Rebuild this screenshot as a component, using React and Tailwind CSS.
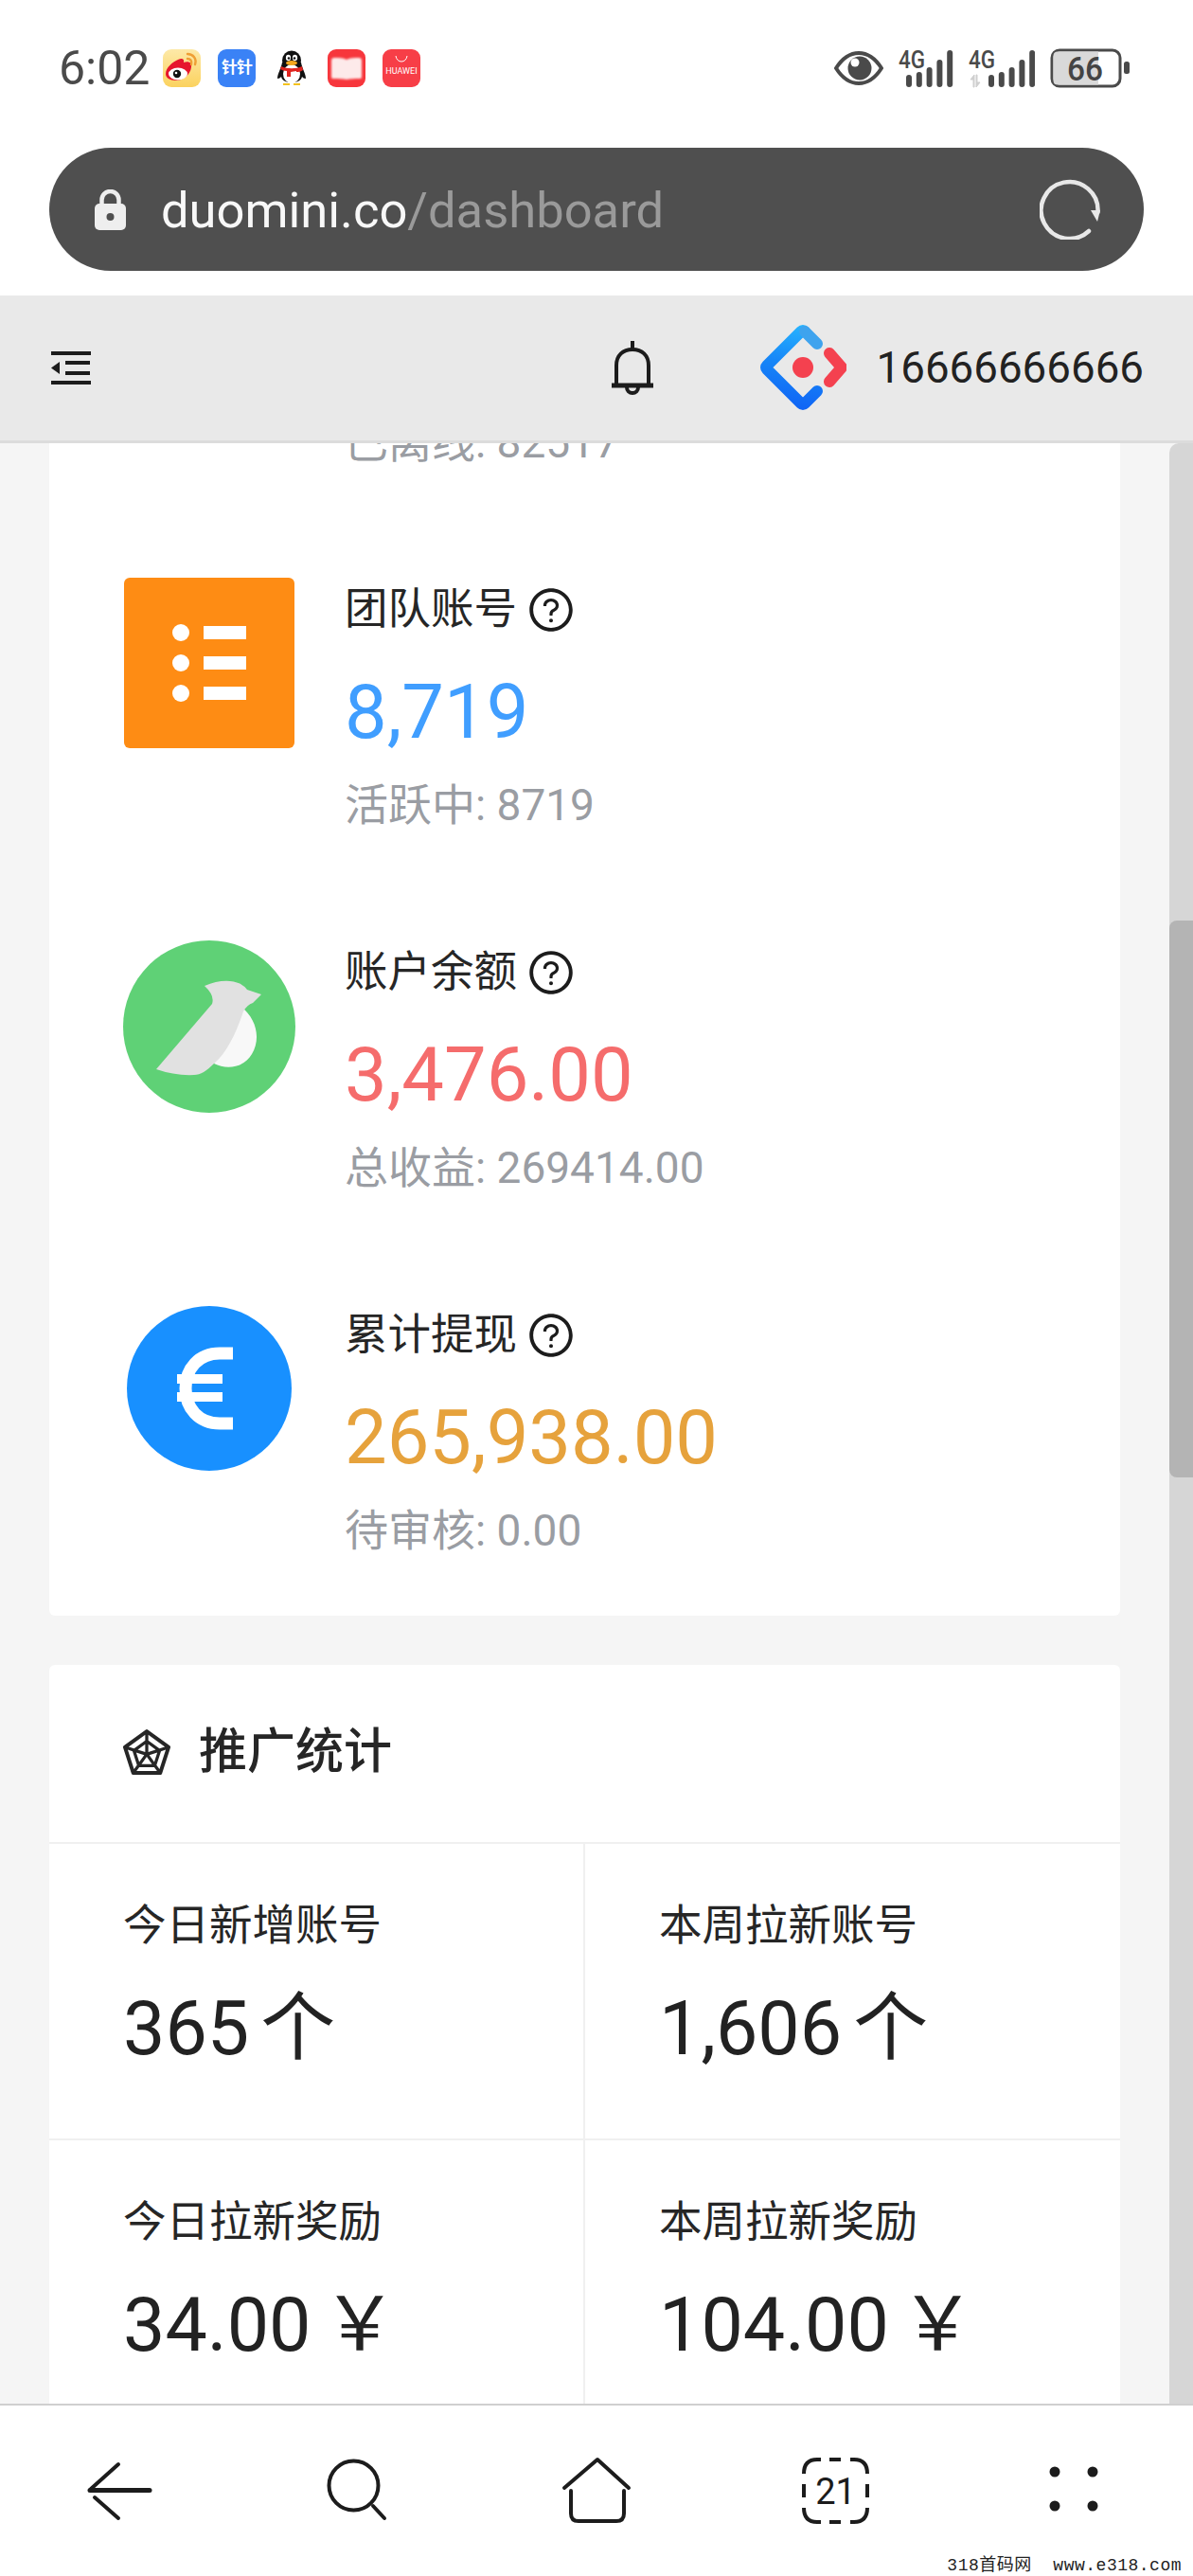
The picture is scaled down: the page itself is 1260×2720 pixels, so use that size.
import { AiOutlineQuestionCircle, AiOutlineRadarChart } from 'react-icons/ai';

const FONT = 'font-["Roboto","Noto_Sans_CJK_SC",sans-serif]';

const Weibo = () => (
  <svg width="40" height="40" viewBox="0 0 40 40" className="rounded-[9px]">
    <defs>
      <linearGradient id="wbBg" x1="0" y1="0" x2="0" y2="40" gradientUnits="userSpaceOnUse">
        <stop offset="0" stopColor="#fde9a8" />
        <stop offset="1" stopColor="#fbd25e" />
      </linearGradient>
    </defs>
    <rect width="40" height="40" fill="url(#wbBg)" />
    <path d="M3 26c0-7 8-13 13-15 4-2 7-1 6 3 5-2 9 0 8 5-1 8-9 14-16 14-7 0-11-3-11-7z" fill="#e6162d" />
    <ellipse cx="16" cy="26" rx="10" ry="6.500" fill="#fff" />
    <circle cx="15" cy="26" r="4.200" fill="#111" />
    <circle cx="14" cy="25" r="1.300" fill="#fff" />
    <path d="M26 5c6 0 10 5 8 11M26 10c3 0 5 2 4 6" fill="none" stroke="#ef9f35" strokeWidth="2.400" strokeLinecap="round" />
  </svg>
);

const Zhen = () => (
  <div className={`w-10 h-10 rounded-[9px] bg-[#3a82f6] text-white text-[17px] font-bold flex items-center justify-center tracking-[-1px] ${FONT}`}>
    针针
  </div>
);

const Penguin = () => (
  <svg width="40" height="40" viewBox="0 0 40 40">
    <ellipse cx="20" cy="12" rx="10" ry="10.500" fill="#111" />
    <path d="M10 14c-1 6-5 12-5 17 2 0 3-1 4-2 1 4 5 6 11 6s10-2 11-6c1 1 2 2 4 2 0-5-4-11-5-17z" fill="#111" />
    <ellipse cx="20" cy="26" rx="9" ry="10" fill="#fff" />
    <ellipse cx="16.500" cy="9" rx="2.600" ry="3.200" fill="#fff" />
    <ellipse cx="23.500" cy="9" rx="2.600" ry="3.200" fill="#fff" />
    <circle cx="17" cy="9.500" r="1.300" fill="#111" />
    <circle cx="23" cy="9.500" r="1.300" fill="#111" />
    <ellipse cx="20" cy="14.500" rx="6" ry="2.400" fill="#f4a71c" />
    <path d="M9 18c6 3 16 3 22 0l1 4c-3 2-5 2-7 2v-1l-6 1v5h-4v-6c-3 0-5-1-7-2z" fill="#e0241f" />
    <path d="M11 36h7v2h-7zM22 36h7v2h-7z" fill="#f4c21c" />
  </svg>
);

const RedBook = () => (
  <svg width="40" height="40" viewBox="0 0 40 40" className="rounded-[9px]">
    <rect width="40" height="40" fill="#f7363c" />
    <path d="M7 9c5 0 9 0 13 2 4-2 9-2 13-2 2 0 3 1 3 3v17c0 2-1 2-3 2-4 0-9 0-13 1-4-1-9-1-13-1-2 0-3 0-3-2V12c0-2 1-3 3-3z" fill="#fdeaea" className="blur-[0.8px]" />
  </svg>
);

const HuaweiApp = () => (
  <div className="w-10 h-10 rounded-[9px] bg-[#f73e47] flex flex-col items-center pt-[6px]">
    <svg width="14" height="8" viewBox="0 0 14 8">
      <path d="M1 1c1 8 11 8 12 0" fill="none" stroke="#fff" strokeWidth="1" />
    </svg>
    <span className={`text-[9px] leading-[10px] mt-[4px] text-white ${FONT}`}>HUAWEI</span>
  </div>
);

const Eye = () => (
  <svg width="52" height="36" viewBox="0 0 52 36">
    <path d="M2 18C9 7 17 2 26 2s17 5 24 16c-7 11-15 16-24 16S9 29 2 18z" fill="none" stroke="#4a4a4a" strokeWidth="4" />
    <circle cx="27" cy="18" r="12.500" fill="#4a4a4a" />
    <circle cx="22" cy="12" r="4.500" fill="#fff" />
  </svg>
);

const Signal = ({ width, barX, arrows }) => (
  <svg width={width} height="42" viewBox={`0 0 ${width} 42`}>
    <text x="0" y="21" fontFamily="Roboto" fontWeight="500" fontSize="26" fill="#4a4a4a" textLength="28" lengthAdjust="spacingAndGlyphs">4G</text>
    {arrows && (
      <g fill="#cfcfcf">
        <path d="M5 41V33H2l4-5v13zM9 28v8h3l-4 5V28z" stroke="#cfcfcf" strokeWidth="1" />
      </g>
    )}
    {[28, 25, 20, 12, 2].map((top, i) => (
      <rect key={i} x={barX + i * 10.8} y={top} width="6" height={41 - top} rx="3" fill="#4a4a4a" />
    ))}
  </svg>
);

const Battery = () => (
  <svg width="84" height="42" viewBox="0 0 84 42">
    <rect x="2" y="2" width="72" height="38" rx="8" fill="#fff" stroke="#4a4a4a" strokeWidth="3" />
    <path d="M8 3.500h43v35H8q-4.500 0-4.500-4.500V8q0-4.500 4.500-4.500z" fill="#d9d9d9" />
    <text x="37" y="34" textAnchor="middle" fontFamily="Roboto" fontWeight="500" fontSize="35" fill="#444" textLength="38" lengthAdjust="spacingAndGlyphs">66</text>
    <rect x="78" y="14" width="6" height="13" rx="2.500" fill="#4a4a4a" />
  </svg>
);

const Lock = () => (
  <svg width="33" height="43" viewBox="0 0 33 43">
    <path d="M7.500 17v-6a9 9 0 0 1 18 0v6" fill="none" stroke="#eeeeee" strokeWidth="4.500" />
    <rect y="15" width="33" height="28" rx="5" fill="#eeeeee" />
    <circle cx="16.500" cy="29" r="4" fill="#4f4f4f" />
  </svg>
);

const Reload = () => (
  <svg width="64" height="64" viewBox="0 0 64 64">
    <path d="M52 55A30 30 0 1 1 61.500 35" fill="none" stroke="#e8e8e8" strokeWidth="4.500" strokeLinecap="round" />
    <path d="M54 33h10l-3 12z" fill="#e8e8e8" />
  </svg>
);

const MenuFold = () => (
  <svg width="42" height="35" viewBox="0 0 42 35" fill="#1c1c1c">
    <rect width="42" height="4" />
    <rect x="15" y="10" width="26" height="4" />
    <rect x="15" y="21" width="26" height="4" />
    <rect y="31" width="42" height="4" />
    <path d="M9 11v13L0 17.500z" />
  </svg>
);

const Bell = () => (
  <svg width="44" height="57" viewBox="0 0 44 57" fill="none" stroke="#1c1c1c" strokeWidth="4">
    <path d="M22 0v9" />
    <path d="M5 47V26C5 15 12 9 22 9s17 6 17 17v21" />
    <path d="M0 47h44" strokeWidth="5" />
    <path d="M16 49a6 6 0 0 0 12 0" />
  </svg>
);

const AntLogo = () => (
  <svg width="91" height="91" viewBox="0 0 91 91" fill="none" strokeWidth="12" strokeLinecap="round" strokeLinejoin="round">
    <defs>
      <linearGradient id="antBlue" x1="45" y1="0" x2="30" y2="90" gradientUnits="userSpaceOnUse">
        <stop offset="0" stopColor="#27b4ff" />
        <stop offset="0.45" stopColor="#1787f7" />
        <stop offset="1" stopColor="#0f62f5" />
      </linearGradient>
    </defs>
    <path d="M60 70L47 83q-2 2-4 0L7 47q-2-2 0-4L43 7q2-2 4 0" stroke="url(#antBlue)" />
    <path d="M47 7l13 13" stroke="#3ea3ee" />
    <path d="M73 30l13 15-13 15" stroke="#f4414f" />
    <circle cx="45" cy="45" r="11" fill="#f4414f" stroke="none" />
  </svg>
);

const ListIcon = () => (
  <div className="w-[180px] h-[180px] rounded-[6px] bg-[#fe8c14]">
    <svg width="180" height="180" viewBox="0 0 180 180" fill="#fff">
      <circle cx="60" cy="58" r="9" />
      <circle cx="60" cy="90" r="9" />
      <circle cx="60" cy="122" r="9" />
      <rect x="84" y="51" width="45" height="14" />
      <rect x="84" y="83" width="45" height="14" />
      <rect x="84" y="115" width="45" height="14" />
    </svg>
  </div>
);

const BirdIcon = () => (
  <div className="w-[182px] h-[182px] rounded-full bg-[#5fd176]">
    <svg width="182" height="182" viewBox="0 0 182 182">
      <path d="M122 68C141 81 146 103 136 120C128 134 110 137 96 130Z" fill="#f8f8f8" />
      <path d="M86 48Q100 42 113 43Q125 44 131 52L146 57L137 66Q131 68 127 75C119 99 109 119 96 130C88 138 82 142 75 142Q55 143 35 136L94 67Q97 58 86 48Z" fill="#e1e1e1" />
    </svg>
  </div>
);

const EuroIcon = () => (
  <div className="w-[174px] h-[174px] mt-[3px] rounded-full bg-[#1890ff]">
    <svg width="174" height="174" viewBox="0 0 174 174" fill="none" stroke="#fff" strokeWidth="13">
      <path d="M112 50H98C76 50 62 66 62 87s14 37 36 37h14" />
      <path d="M53 77h48M53 96h48" strokeWidth="10" />
    </svg>
  </div>
);

const StatRow = ({ icon, label, value, color, sub }) => (
  <div className="flex h-[313px]">
    <div className="w-[312px] shrink-0 pl-[78px] flex">
      <div className="w-[182px] flex justify-center items-start">{icon}</div>
    </div>
    <div>
      <div className="mt-[11px] h-[46px] flex items-center">
        <span className="text-[45.500px] leading-[46px] text-[#262626]">{label}</span>
        <AiOutlineQuestionCircle size={52} className="ml-[10px] text-[#1c1c1c]" />
      </div>
      <div className="mt-[35px] h-[100px] text-[79.500px] leading-[100px]" style={{ color }}>{value}</div>
      <div className="mt-[18px] h-[60px] text-[46px] leading-[60px] text-[#9a9da3]">{sub}</div>
    </div>
  </div>
);

const PromoCell = ({ label, value, unit, left }) => (
  <div className={`h-[313px] border-b-2 border-[#f0f0f0] pl-[78px] ${left ? 'border-r-2' : ''}`}>
    <div className="pt-[57px] h-[117px] text-[45.500px] leading-[60px] text-[#262626]">{label}</div>
    <div className="mt-[28px] h-[100px] text-[79px] leading-[100px] text-[#222] flex">
      <span>{value}</span>
      <span className="ml-[12px]">{unit}</span>
    </div>
  </div>
);

const Nav = () => (
  <div className="h-[182px] border-t-2 border-[#cfcfcf] bg-white grid grid-cols-5 pt-[50px]">
    <div className="flex justify-center">
      <svg width="80" height="80" viewBox="0 0 80 80" fill="none" stroke="#1c1c1c" strokeWidth="4" strokeLinecap="round">
        <path d="M39 12L10 38" />
        <path d="M9 39.500h63" strokeWidth="5" />
        <path d="M14 47l25 22" />
      </svg>
    </div>
    <div className="flex justify-center">
      <svg width="80" height="80" viewBox="0 0 80 80" fill="none" stroke="#1c1c1c" strokeWidth="4" strokeLinecap="round">
        <circle cx="35.500" cy="34.500" r="26" />
        <path d="M56 56l12 13" />
      </svg>
    </div>
    <div className="flex justify-center">
      <svg width="80" height="80" viewBox="0 0 80 80" fill="none" stroke="#1c1c1c" strokeWidth="4" strokeLinecap="round" strokeLinejoin="round">
        <path d="M6 37L41 7l33 30" />
        <path d="M13 40v24q0 8 8 8h40q8 0 8-8V40" />
      </svg>
    </div>
    <div className="flex justify-center">
      <svg width="80" height="80" viewBox="0 0 80 80" fill="none" stroke="#1c1c1c" strokeWidth="4">
        <path d="M34 7h12M34 73h12M7 33v14M74 33v14" />
        <path d="M25 7h-4Q7 7 7 22M56 7h4q14 0 14 15M25 73h-4Q7 73 7 58M56 73h4q14 0 14-15" />
        <text x="40.500" y="54" textAnchor="middle" fontFamily="Roboto" fontSize="38" fill="#1c1c1c" stroke="none">21</text>
      </svg>
    </div>
    <div className="flex justify-center">
      <svg width="80" height="80" viewBox="0 0 80 80" fill="#1c1c1c">
        <circle cx="20" cy="20" r="5.500" />
        <circle cx="60" cy="20" r="5.500" />
        <circle cx="20" cy="56" r="5.500" />
        <circle cx="60" cy="56" r="5.500" />
      </svg>
    </div>
  </div>
);

export default function App() {
  return (
    <div className={`relative w-[1260px] h-[2720px] overflow-hidden bg-white ${FONT}`}>
      {/* status bar */}
      <div className="h-[156px] pb-[12px] pl-[62px] pr-[67px] flex items-center justify-between">
        <div className="flex items-center">
          <span className="w-[95px] text-[50px] leading-none text-[#4a4a4a] mr-[15px]">6:02</span>
          <div className="flex items-center gap-[18px]">
            <Weibo />
            <Zhen />
            <Penguin />
            <RedBook />
            <HuaweiApp />
          </div>
        </div>
        <div className="flex items-center gap-[16px]">
          <Eye />
          <Signal width={58} barX={8} />
          <Signal width={70} barX={21} arrows />
          <Battery />
        </div>
      </div>

      {/* url bar */}
      <div className="h-[156px] px-[52px]">
        <div className="h-[130px] rounded-[65px] bg-[#4f4f4f] flex items-center pl-[48px] pr-[46px]">
          <Lock />
          <div className="ml-[37px] pt-[3px] flex-1 text-[52.500px] leading-none text-[#f8f8f8]">
            duomini.co<span className="text-[#9a9a9a]">/dashboard</span>
          </div>
          <Reload />
        </div>
      </div>

      {/* app header */}
      <div className="h-[156px] bg-[#e9e9e9] border-b-[3px] border-[#dcdcdc] flex items-center pl-[54px] pr-[52px]">
        <MenuFold />
        <div className="ml-auto"><Bell /></div>
        <div className="ml-[113px]"><AntLogo /></div>
        <span className="ml-[32px] text-[45.700px] leading-none text-[#222]">16666666666</span>
      </div>

      <div className="h-[2070px] bg-[#f5f5f5] flex overflow-hidden">
        <div className="flex-1 px-[52px]">
          <div className="-mt-[31px] bg-white rounded-[6px] pb-[17px]">
            <div className="pl-[312px] h-[103px] text-[46px] leading-[60px] text-[#9a9da3]">已离线: 82517</div>
            <div className="mt-[70px] flex flex-col gap-[70px]">
              <StatRow icon={<ListIcon />} label="团队账号" value="8,719" color="#409eff" sub="活跃中: 8719" />
              <StatRow icon={<BirdIcon />} label="账户余额" value="3,476.00" color="#f56c6c" sub="总收益: 269414.00" />
              <StatRow icon={<EuroIcon />} label="累计提现" value="265,938.00" color="#e6a23c" sub="待审核: 0.00" />
            </div>
          </div>

          <div className="mt-[52px] bg-white rounded-[6px]">
            <div className="h-[189px] border-b-2 border-[#f0f0f0] flex items-center pl-[73px] pb-[4px]">
              <AiOutlineRadarChart size={60} className="text-[#262626]" />
              <span className="ml-[25px] text-[51px] leading-none font-medium text-[#262626]">推广统计</span>
            </div>
            <div className="grid grid-cols-[566px_1fr]">
              <PromoCell left label="今日新增账号" value="365" unit="个" />
              <PromoCell label="本周拉新账号" value="1,606" unit="个" />
              <PromoCell left label="今日拉新奖励" value="34.00" unit={'\uFFE5'} />
              <PromoCell label="本周拉新奖励" value="104.00" unit={'\uFFE5'} />
            </div>
          </div>
        </div>
        {/* scrollbar */}
        <div className="w-[25px] bg-[#d6d6d6] rounded-tl-[10px] pt-[504px]">
          <div className="h-[588px] bg-[#b4b4b4] rounded-l-[8px]" />
        </div>
      </div>

      <Nav />

      <div className='absolute right-[12px] bottom-0 text-[18px] leading-[22px] whitespace-pre tracking-[0.5px] text-[#222] font-["Liberation_Mono","Noto_Sans_CJK_SC",monospace]'>
        318首码网  www.e318.com
      </div>
    </div>
  );
}
